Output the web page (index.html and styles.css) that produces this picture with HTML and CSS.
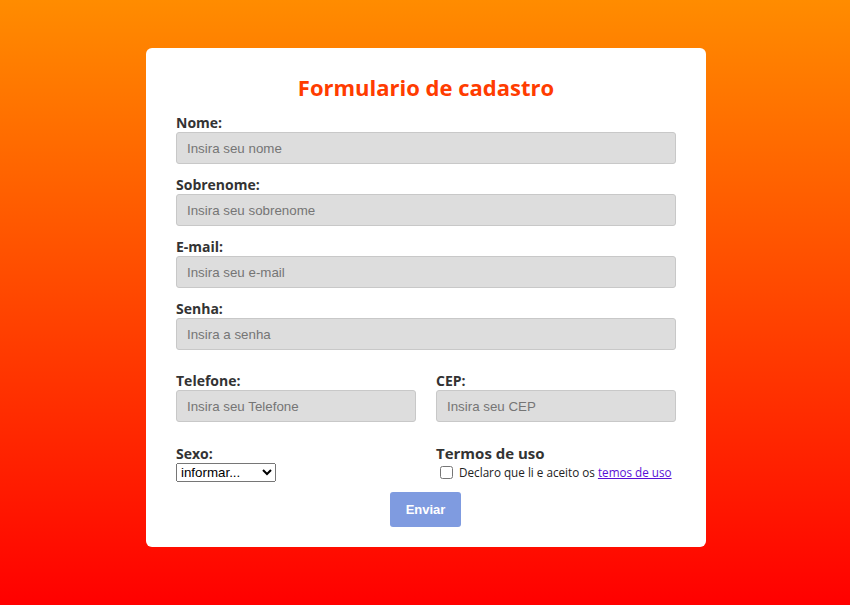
FILE: index.html
```html
<!DOCTYPE html>
<html lang="pt-BR">
<head>
<meta charset="utf-8">
<title>Formulario de cadastro</title>
<link rel="stylesheet" href="styles.css">
</head>
<body>
<main class="card">
  <h1 class="title">Formulario de cadastro</h1>
  <form class="form">
    <div class="field">
      <label class="label" for="nome">Nome:</label>
      <input class="input" id="nome" type="text" placeholder="Insira seu nome">
    </div>
    <div class="field">
      <label class="label" for="sobrenome">Sobrenome:</label>
      <input class="input" id="sobrenome" type="text" placeholder="Insira seu sobrenome">
    </div>
    <div class="field">
      <label class="label" for="email">E-mail:</label>
      <input class="input" id="email" type="email" placeholder="Insira seu e-mail">
    </div>
    <div class="field">
      <label class="label" for="senha">Senha:</label>
      <input class="input" id="senha" type="password" placeholder="Insira a senha">
    </div>
    <div class="row">
      <div class="field">
        <label class="label" for="telefone">Telefone:</label>
        <input class="input" id="telefone" type="text" placeholder="Insira seu Telefone">
      </div>
      <div class="field">
        <label class="label" for="cep">CEP:</label>
        <input class="input" id="cep" type="text" placeholder="Insira seu CEP">
      </div>
    </div>
    <div class="row row-bottom">
      <div class="col">
        <label class="label" for="sexo">Sexo:</label>
        <select class="select" id="sexo">
          <option>informar...</option>
          <option>Masculino</option>
          <option>Feminino</option>
        </select>
      </div>
      <div class="col">
        <span class="label label-lg">Termos de uso</span>
        <label class="terms"><input class="check" type="checkbox"> Declaro que li e aceito os <a class="link" href="#">temos de uso</a></label>
      </div>
    </div>
    <div class="actions">
      <button class="button" type="submit">Enviar</button>
    </div>
  </form>
</main>
</body>
</html>
```

FILE: styles.css
```css
html, body {
  margin: 0;
  height: 100%;
}
body {
  background: linear-gradient(to bottom, #ff8c00, #ff0000);
  display: flex;
  justify-content: center;
  align-items: flex-start;
  padding: 48px 0 0 2px;
  box-sizing: border-box;
  font-family: "Open Sans", "Liberation Sans", sans-serif;
  color: #333;
}
.card {
  width: 560px;
  box-sizing: border-box;
  background: #fff;
  border-radius: 6px;
  padding: 24px 30px 20px;
}
.title {
  margin: 0 0 11px;
  text-align: center;
  font-size: 22px;
  line-height: 30px;
  font-weight: 700;
  color: #ff3c00;
}
.form {
  display: flex;
  flex-direction: column;
}
.field {
  display: flex;
  flex-direction: column;
  margin-bottom: 11px;
}
.label {
  font-size: 14px;
  line-height: 19px;
  font-weight: 700;
  color: #333;
}
.label-lg {
  font-size: 15px;
  line-height: 15px;
  margin-top: 2px;
}
.input {
  height: 32px;
  box-sizing: border-box;
  border: 1px solid #c8c8c8;
  border-radius: 3px;
  background: #dddddd;
  padding: 0 10px;
  font-family: "Liberation Sans", Arial, sans-serif;
  font-size: 13.333px;
  color: #333;
}
.input::placeholder {
  color: #757575;
}
.row {
  display: grid;
  grid-template-columns: 1fr 1fr;
  column-gap: 20px;
  margin-top: 10px;
}
.row-bottom {
  margin-top: 11px;
}
.col {
  display: flex;
  flex-direction: column;
  align-items: flex-start;
}
.select {
  width: 100px;
  height: 19px;
  font-family: "Liberation Sans", Arial, sans-serif;
  font-size: 13.333px;
}
.terms {
  font-size: 11.7px;
  line-height: 18px;
  margin-top: 2px;
  display: flex;
  align-items: center;
  white-space: pre;
  color: #222;
}
.check {
  margin: 0 3px 0 4px;
  width: 13px;
  height: 13px;
}
.link {
  color: #5a0fd6;
}
.actions {
  display: flex;
  justify-content: center;
  margin-top: 10px;
  padding-right: 1px;
}
.button {
  width: 71px;
  height: 35px;
  border: none;
  border-radius: 3px;
  background: #7f9be0;
  color: #fff;
  font-family: "Liberation Sans", Arial, sans-serif;
  font-size: 13px;
  font-weight: 700;
}
```
